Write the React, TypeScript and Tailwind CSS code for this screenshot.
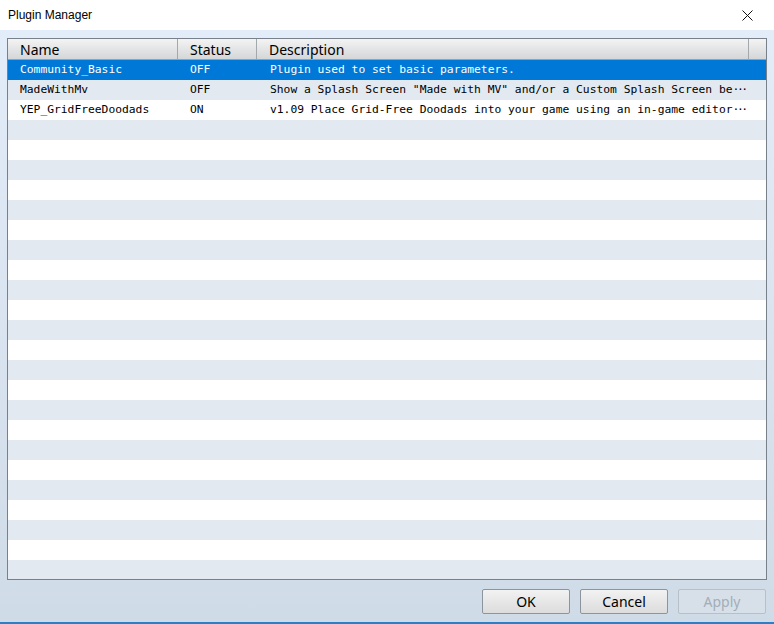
import React from "react";

const rows = [
  { name: "Community_Basic", status: "OFF", desc: "Plugin used to set basic parameters.", more: false },
  { name: "MadeWithMv", status: "OFF", desc: 'Show a Splash Screen "Made with MV" and/or a Custom Splash Screen be', more: true },
  { name: "YEP_GridFreeDoodads", status: "ON", desc: "v1.09 Place Grid-Free Doodads into your game using an in-game editor", more: true },
];

export default function App() {
  const all = Array.from({ length: 27 }, (_, i) => rows[i] ?? null);
  return (
    <div className="w-[774px] h-[624px] flex flex-col overflow-hidden" style={{ fontFamily: '"Liberation Sans", Arial, sans-serif' }}>
      <div className="h-[30px] bg-white flex items-center justify-between pl-[8px] pr-[21px] shrink-0">
        <span className="text-[12px] text-black">Plugin Manager</span>
        <svg width="11" height="11" viewBox="0 0 11 11" className="mt-[1px]">
          <path d="M0.5 0.5 L10.5 10.5 M10.5 0.5 L0.5 10.5" stroke="#111" strokeWidth="1" />
        </svg>
      </div>
      <div className="flex-1 flex flex-col bg-gradient-to-b from-[#e3edf9] to-[#cfdbe7]">
        <div className="pt-[8px] px-[7px]">
          <div className="h-[542px] border border-[#788089] bg-white overflow-hidden flex flex-col">
            <div
              className="h-[21px] shrink-0 grid grid-cols-[170px_79px_492px_1fr] bg-gradient-to-b from-[#f4f4f4] to-[#d4d6d8] border-b border-[#9aa0a6] text-[14px] text-black leading-none"
              style={{ fontFamily: '"Noto Sans", "Open Sans", sans-serif' }}
            >
              <div className="pl-[12px] pt-[1px] flex items-center border-r border-[#a3a8ad]">Name</div>
              <div className="pl-[12px] pt-[1px] flex items-center border-r border-[#a3a8ad]">Status</div>
              <div className="pl-[12px] pt-[1px] flex items-center border-r border-[#a3a8ad]">Description</div>
              <div />
            </div>
            {all.map((r, i) => {
              const sel = i === 0;
              const bg = sel ? "bg-[#0078d7] text-white" : i % 2 === 1 ? "bg-[#e3e9f0] text-black" : "bg-white text-black";
              return (
                <div
                  key={i}
                  className={`h-[20px] shrink-0 grid grid-cols-[170px_79px_492px_1fr] items-center text-[11.3px] whitespace-pre ${bg}`}
                  style={{ fontFamily: '"DejaVu Sans Mono", "Liberation Mono", monospace' }}
                >
                  <div className="pl-[12px]">{r?.name ?? ""}</div>
                  <div className="pl-[12px]">{r?.status ?? ""}</div>
                  <div className="pl-[13px] overflow-hidden">
                    {r?.desc ?? ""}
                    {r?.more ? <span className="tracking-[-2.4px]">{"\u00B7\u00B7\u00B7"}</span> : null}
                  </div>
                  <div />
                </div>
              );
            })}
          </div>
        </div>
        <div
          className="flex justify-end gap-[10px] pr-[8px] pt-[9px]"
          style={{ fontFamily: '"Noto Sans", "Open Sans", sans-serif' }}
        >
          <button className="w-[88px] h-[25px] border border-[#8d959c] rounded-[2px] bg-gradient-to-b from-[#f2f2f2] to-[#dcdcdc] text-[14px] text-black flex items-center justify-center leading-none">OK</button>
          <button className="w-[88px] h-[25px] border border-[#8d959c] rounded-[2px] bg-gradient-to-b from-[#f2f2f2] to-[#dcdcdc] text-[14px] text-black flex items-center justify-center leading-none">Cancel</button>
          <button className="w-[88px] h-[25px] border border-[#b7c0c9] rounded-[2px] bg-[#d7e0e9] text-[14px] text-[#a3adb7] flex items-center justify-center leading-none">Apply</button>
        </div>
      </div>
      <div className="h-[2px] bg-[#2a7fc6] shrink-0" />
    </div>
  );
}
